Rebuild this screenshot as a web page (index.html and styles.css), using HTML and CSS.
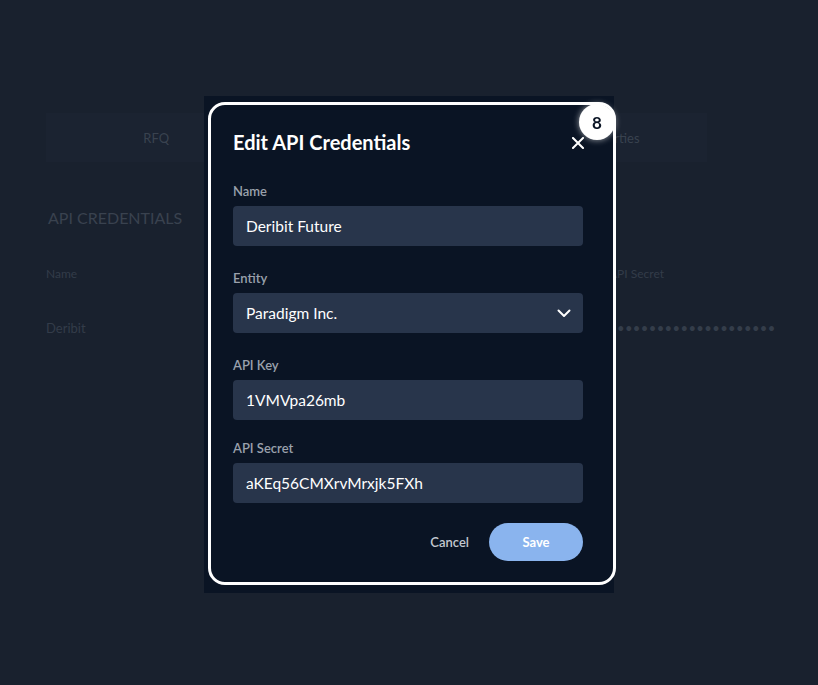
FILE: index.html
```html
<!DOCTYPE html>
<html>
<head>
<meta charset="utf-8">
<link rel="stylesheet" href="styles.css">
</head>
<body>
<div class="page">
  <div class="tabs">
    <div class="tab">RFQ</div>
    <div class="tab"></div>
    <div class="tab">Counterparties</div>
  </div>
  <h2 class="section-title">API CREDENTIALS</h2>
  <div class="table">
    <div class="row head">
      <div class="c-name">Name</div>
      <div class="c-key"></div>
      <div class="c-secret">API Secret</div>
    </div>
    <div class="row body">
      <div class="c-name">Deribit</div>
      <div class="c-key"></div>
      <div class="c-secret dots">•••••••••••••••••••••</div>
    </div>
  </div>
</div>

<div class="overlay">
  <div class="modal">
    <div class="highlight"></div>
    <div class="badge">8</div>
    <div class="modal-head">
      <h1 class="modal-title">Edit API Credentials</h1>
      <svg class="close" width="12" height="12" viewBox="0 0 12 12"><path d="M1 1L11 11M11 1L1 11" stroke="#fff" stroke-width="2" stroke-linecap="square" fill="none"/></svg>
    </div>
    <div class="field">
      <label class="label">Name</label>
      <div class="input">Deribit Future</div>
    </div>
    <div class="field">
      <label class="label">Entity</label>
      <div class="input select">Paradigm Inc.
        <svg class="chev" width="14" height="9" viewBox="0 0 14 9"><path d="M1.5 1.5L7 7L12.5 1.5" stroke="#fff" stroke-width="2" fill="none" stroke-linecap="round" stroke-linejoin="round"/></svg>
      </div>
    </div>
    <div class="field tight">
      <label class="label">API Key</label>
      <div class="input">1VMVpa26mb</div>
    </div>
    <div class="field last">
      <label class="label">API Secret</label>
      <div class="input">aKEq56CMXrvMrxjk5FXh</div>
    </div>
    <div class="actions">
      <button class="btn-cancel">Cancel</button>
      <button class="btn-save">Save</button>
    </div>
  </div>
</div>
</body>
</html>
```

FILE: styles.css
```css
* { box-sizing: border-box; }
html, body { margin: 0; height: 100%; }
body {
  background: #19212e;
  font-family: Lato, "Open Sans", sans-serif;
  color: #fff;
  overflow: hidden;
}
.page {
  padding: 113px 0 0 46px;
}
.tabs {
  display: flex;
  width: 661px;
  height: 49px;
  background: #1b2331;
}
.tab {
  flex: 1;
  display: flex;
  align-items: center;
  justify-content: center;
  font-size: 13px;
  color: #39424f;
}
.section-title {
  margin: 46px 0 0 2px;
  font-size: 16px;
  font-weight: 400;
  color: #39424f;
  line-height: 20px;
}
.table { margin-top: 35px; }
.row { display: flex; color: #333c49; }
.row.head { font-size: 12px; height: 20px; align-items: center; }
.row.body { font-size: 13px; margin-top: 35px; height: 20px; align-items: center; }
.c-name { width: 300px; }
.c-key { width: 263px; }
.c-secret { width: 200px; }
.dots { letter-spacing: 0.4px; font-size: 13px; color: #343d4a; }

.overlay {
  position: fixed;
  inset: 0;
  display: flex;
  justify-content: center;
  align-items: flex-start;
  padding-top: 96px;
}
.modal {
  position: relative;
  width: 410px;
  height: 497px;
  background: #0a1424;
  padding: 34px 31px 0 29px;
}
.highlight {
  position: absolute;
  left: 4px;
  top: 6px;
  width: 408px;
  height: 483px;
  border: 3px solid #fff;
  border-radius: 17px;
  pointer-events: none;
}
.badge {
  position: absolute;
  left: 375px;
  top: 8px;
  width: 36px;
  height: 36px;
  border-radius: 50%;
  background: #fff;
  color: #0a1424;
  font-weight: 700;
  font-size: 17px;
  display: flex;
  align-items: center;
  justify-content: center;
  box-shadow: 0 0 6px rgba(255,255,255,0.6);
}
.modal-head {
  display: flex;
  align-items: center;
  justify-content: space-between;
  height: 24px;
  margin-bottom: 29px;
}
.modal-title {
  margin: 0;
  font-size: 20px;
  font-weight: 700;
  line-height: 24px;
  color: #fff;
}
.close { margin-right: -1px; margin-top: 2px; }
.field { display: flex; flex-direction: column; margin-bottom: 24px; }
.field.tight { margin-bottom: 20px; }
.field.last { margin-bottom: 20px; }
.label {
  font-size: 13px;
  line-height: 16px;
  font-weight: 600;
  color: #9aa1ac;
  margin-bottom: 7px;
}
.input {
  height: 40px;
  background: #28354b;
  border-radius: 4px;
  padding: 0 13px;
  display: flex;
  align-items: center;
  font-size: 15.5px;
  color: #fff;
}
.select { justify-content: space-between; }
.chev { margin-right: -1px; }
.actions {
  display: flex;
  justify-content: flex-end;
  align-items: center;
  gap: 20px;
}
.btn-cancel {
  background: none;
  border: 0;
  padding: 0;
  font-family: inherit;
  font-size: 13px;
  font-weight: 600;
  color: #c3c8d0;
}
.btn-save {
  width: 94px;
  height: 38px;
  border: 0;
  border-radius: 19px;
  background: #8ab4ee;
  color: #fff;
  font-family: inherit;
  font-size: 13px;
  font-weight: 700;
}
```
